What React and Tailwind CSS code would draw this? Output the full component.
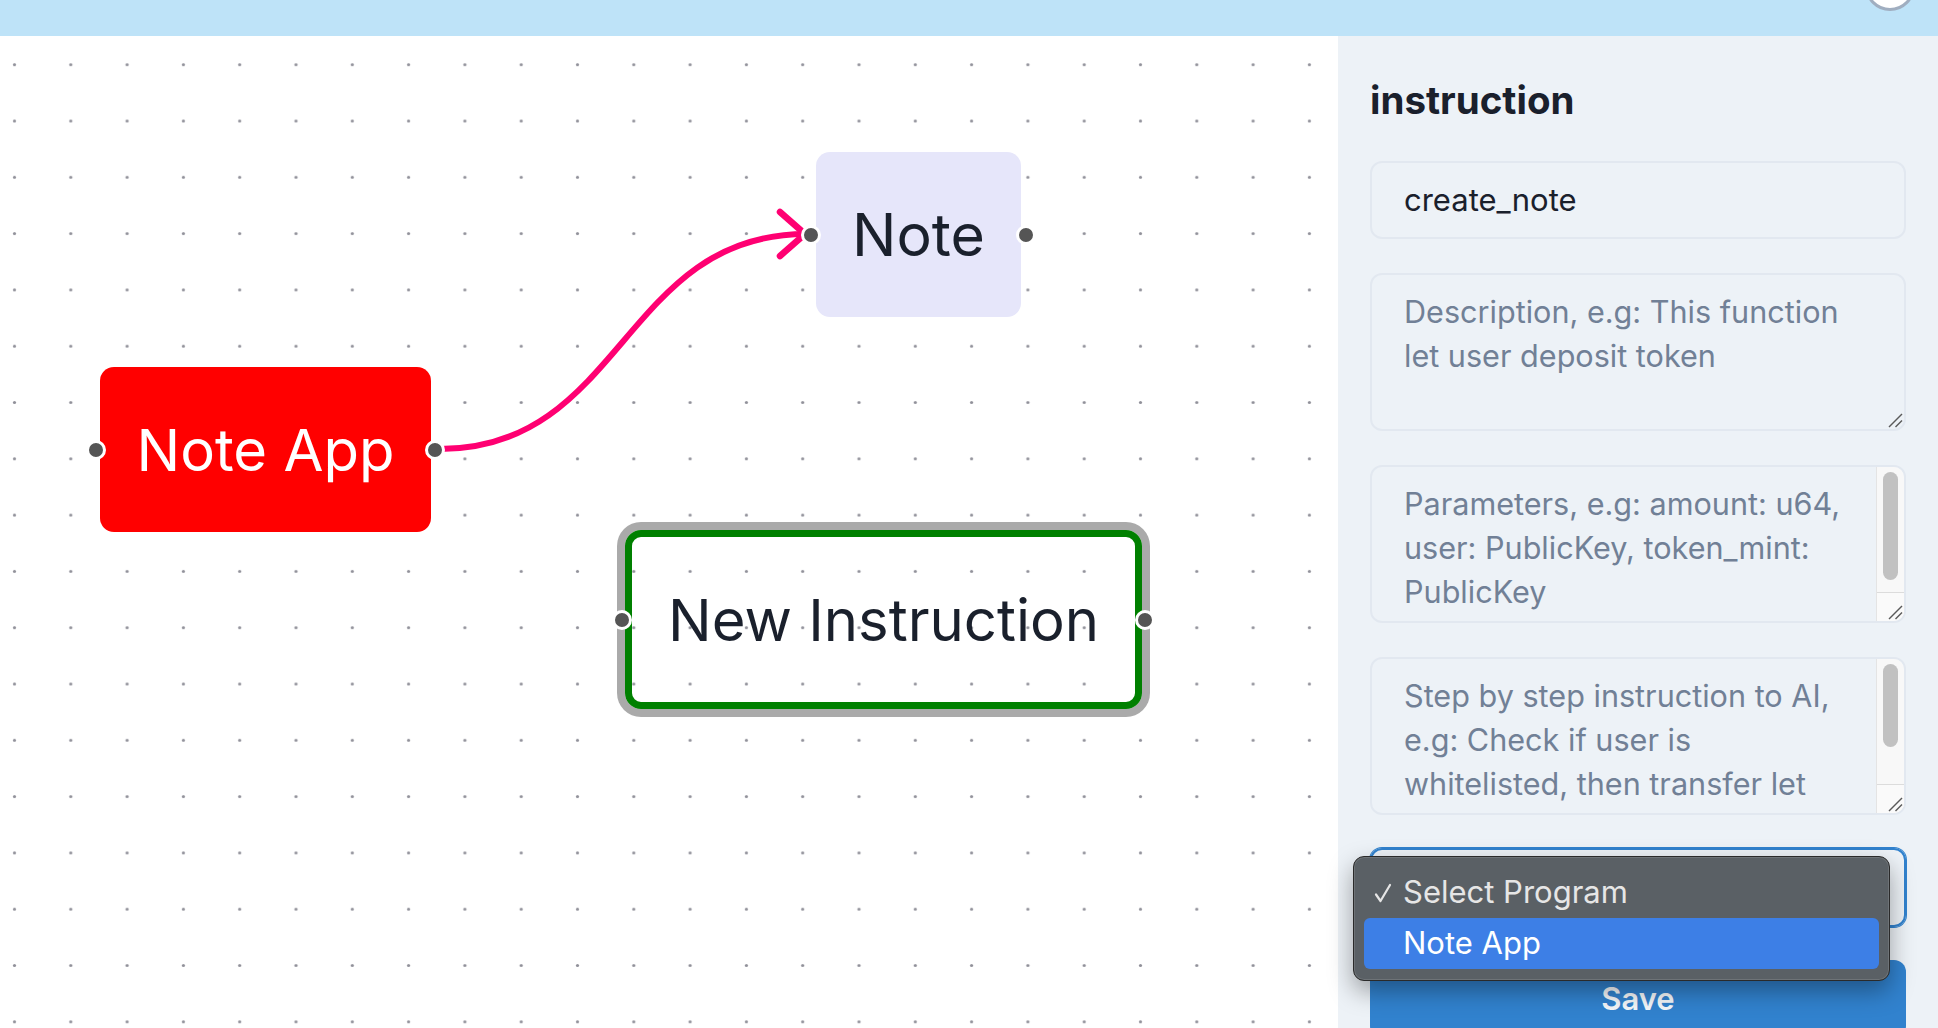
import React from "react";

function Handle({ side, offset }) {
  return (
    <div
      className={
        "absolute top-1/2 -translate-y-1/2 w-[20px] h-[20px] rounded-full bg-[#555555] border-[3px] border-white " +
        (side === "left" ? offset.l : offset.r)
      }
    />
  );
}

function Resizer() {
  return (
    <svg className="absolute right-[1px] bottom-[1px]" width="16" height="16" viewBox="0 0 16 16">
      <line x1="2" y1="15" x2="15" y2="2" stroke="#5a5a5a" strokeWidth="1.5" />
      <line x1="8.5" y1="15" x2="15" y2="8.5" stroke="#5a5a5a" strokeWidth="1.5" />
    </svg>
  );
}

function Area({ lines, scroll, thumbH, className }) {
  return (
    <div className={"relative h-[158px] border-2 border-[#e2e8f0] rounded-[12px] overflow-hidden " + className}>
      <div className="pl-[32px] pt-[15px] text-[30.6px] leading-[44px] text-[#718096]">
        {lines.map((l) => (
          <div key={l} className="whitespace-nowrap">
            {l}
          </div>
        ))}
      </div>
      {scroll ? (
        <div className="absolute right-0 top-0 bottom-0 w-[28px] bg-[#f8f8f8] border-l border-[#e4e4e4]">
          <div className={"absolute top-[5px] left-[6px] w-[15px] rounded-full bg-[#c1c1c1] " + thumbH} />
          <div className="absolute left-0 right-0 bottom-0 h-[29px] bg-[#fafafa] border-t border-[#dcdcdc]">
            <Resizer />
          </div>
        </div>
      ) : (
        <Resizer />
      )}
    </div>
  );
}

function Canvas() {
  return (
    <div className="relative flex-1 min-w-0 bg-white overflow-hidden">
      <svg className="absolute inset-0 w-full h-full" aria-hidden="true">
        <defs>
          <pattern id="dots" x="-13.65" y="0.55" width="56.3" height="56.3" patternUnits="userSpaceOnUse">
            <circle cx="28.15" cy="28.15" r="1.6" fill="#91919a" />
          </pattern>
        </defs>
        <rect width="100%" height="100%" fill="url(#dots)" />
      </svg>
      <svg className="absolute inset-0 w-full h-full pointer-events-none" aria-hidden="true">
        <path
          d="M440,413 C623,413 623,198 806,198"
          fill="none"
          stroke="#ff0072"
          strokeWidth="6"
        />
        <path
          d="M780,176 L805,198 L780,220"
          fill="none"
          stroke="#ff0072"
          strokeWidth="6.5"
          strokeLinecap="round"
          strokeLinejoin="round"
        />
      </svg>

      <div className="absolute left-[100px] top-[331px] w-[331px] h-[165px] rounded-[14px] bg-[#ff0000] flex items-center justify-center text-white text-[58px] leading-none">
        Note App
        <Handle side="left" offset={{ l: "left-[-14px]", r: "" }} />
        <Handle side="right" offset={{ l: "", r: "right-[-14px]" }} />
      </div>

      <div className="absolute left-[816px] top-[116px] w-[205px] h-[165px] rounded-[14px] bg-[#e6e6fa] flex items-center justify-center text-[#1a202c] text-[59px] leading-none">
        Note
        <Handle side="left" offset={{ l: "left-[-15px]", r: "" }} />
        <Handle side="right" offset={{ l: "", r: "right-[-15px]" }} />
      </div>

      <div className="absolute left-[625px] top-[494px] w-[517px] h-[179px] rounded-[16px] border-[7px] border-[#008000] shadow-[0_0_0_8px_#aaaaaa] flex items-center justify-center text-[#1a202c] text-[58px] leading-none">
        New Instruction
        <Handle side="left" offset={{ l: "left-[-20px]", r: "" }} />
        <Handle side="right" offset={{ l: "", r: "right-[-20px]" }} />
      </div>
    </div>
  );
}

function Sidebar() {
  return (
    <aside className="w-[600px] shrink-0 bg-[#edf2f7] px-[32px] pt-[42px] flex flex-col">
      <h2 className="text-[38.5px] leading-[44px] font-bold text-[#1a202c]">instruction</h2>
      <div className="mt-[39px] h-[78px] shrink-0 border-2 border-[#e2e8f0] rounded-[12px] px-[32px] flex items-center text-[31px] text-[#1a202c]">
        create_note
      </div>
      <Area className="mt-[34px] shrink-0" lines={["Description, e.g: This function", "let user deposit token"]} />
      <Area
        className="mt-[34px] shrink-0"
        scroll
        thumbH="h-[108px]"
        lines={["Parameters, e.g: amount: u64,", "user: PublicKey, token_mint:", "PublicKey"]}
      />
      <Area
        className="mt-[34px] shrink-0"
        scroll
        thumbH="h-[83px]"
        lines={["Step by step instruction to AI,", "e.g: Check if user is", "whitelisted, then transfer let"]}
      />
      <div className="relative mt-[33px] h-[79px] shrink-0 border-2 border-[#3182ce] rounded-[12px] shadow-[0_0_0_1px_#3182ce] z-10">
        <div className="absolute left-[-19px] top-[6px] w-[537px] h-[125px] rounded-[11px] bg-[#5a6065] border border-[#2a2a2a] shadow-[0_10px_24px_rgba(0,0,0,0.35),inset_0_0_0_1px_rgba(255,255,255,0.12)] p-[10px] flex flex-col">
          <div className="h-[51px] flex items-center text-[31px] text-[#e6e6e6] relative">
            <svg className="absolute left-[10px] top-[16px]" width="18" height="20" viewBox="0 0 18 20">
              <path d="M2,11.5 L6.5,18 L16,2" fill="none" stroke="#e6e6e6" strokeWidth="2.2" strokeLinecap="round" strokeLinejoin="round" />
            </svg>
            <span className="pl-[39px]">Select Program</span>
          </div>
          <div className="h-[51px] flex items-center rounded-[6px] bg-[#3d7fe6] text-[31px] text-white">
            <span className="pl-[39px]">Note App</span>
          </div>
        </div>
      </div>
      <div className="mt-[33px] h-[78px] shrink-0 rounded-[12px] bg-[#3182ce] flex items-center justify-center text-[31px] font-semibold text-[#f4f7fa]">
        Save
      </div>
    </aside>
  );
}

export default function App() {
  return (
    <div className="h-screen w-full overflow-hidden flex flex-col font-['Inter',sans-serif]">
      <header className="h-[36px] shrink-0 bg-[#bee3f8] flex justify-end items-end overflow-hidden">
        <div className="w-[50px] h-[50px] shrink-0 rounded-full border-[3px] border-[#a0aec0] bg-white mb-[25px] mr-[23px]" />
      </header>
      <div className="flex flex-1 min-h-0">
        <Canvas />
        <Sidebar />
      </div>
    </div>
  );
}
